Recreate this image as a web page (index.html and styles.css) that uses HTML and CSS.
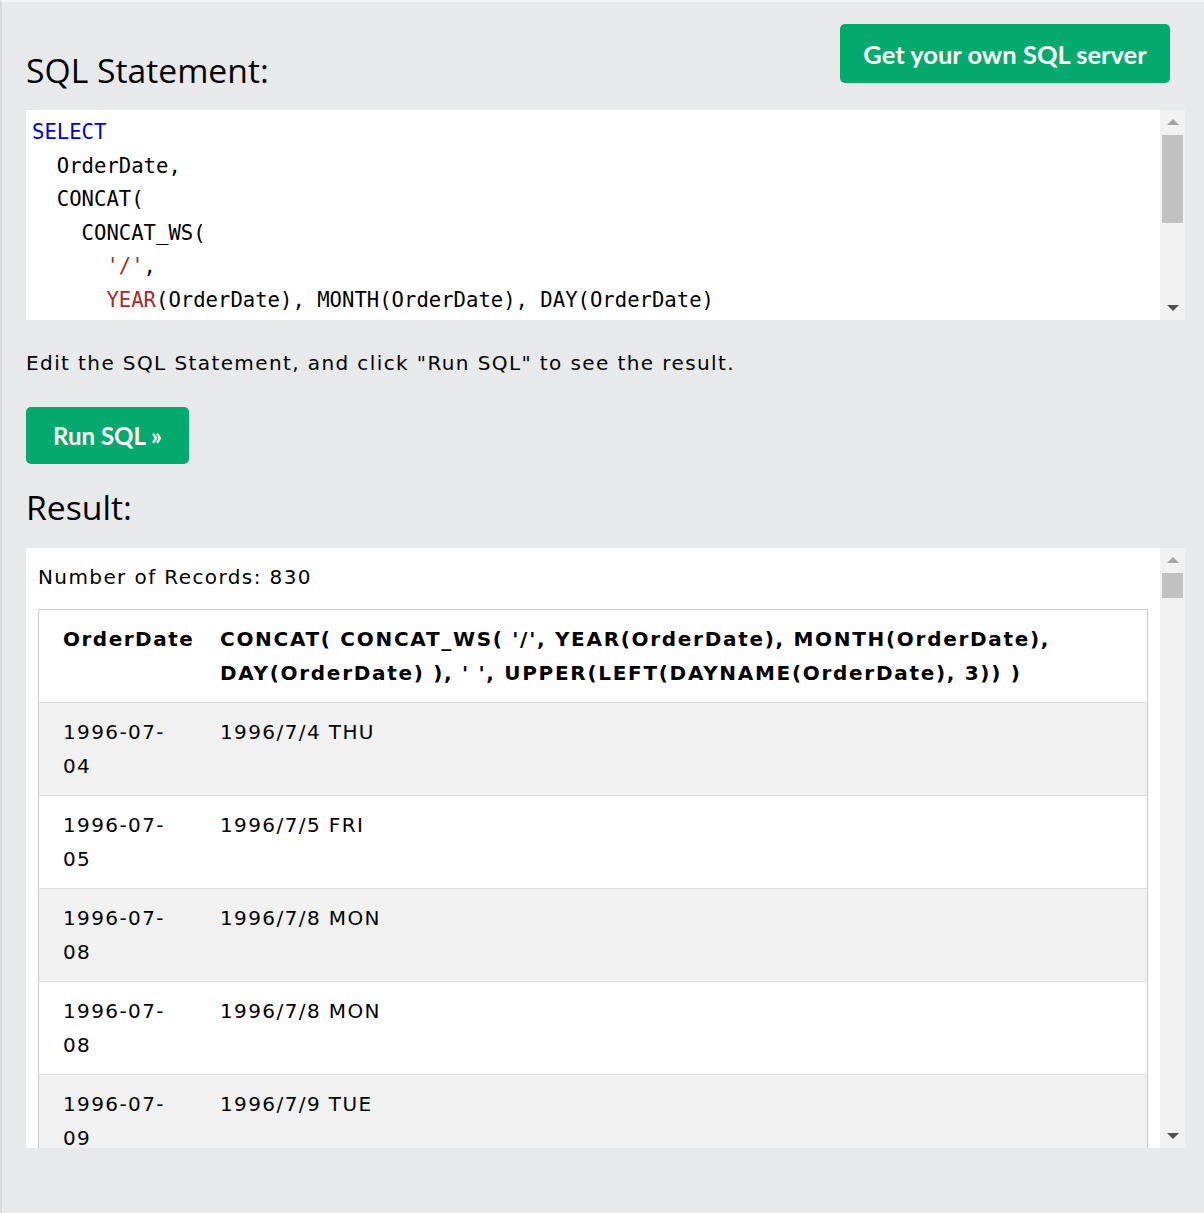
FILE: index.html
```
<!DOCTYPE html>
<html lang="en">
<head>
<meta charset="utf-8">
<title>SQL Tryit</title>
<link rel="stylesheet" href="styles.css">
</head>
<body>
<div class="frame">
  <div class="top-row">
    <h2 class="heading">SQL Statement:</h2>
    <a class="btn btn-server" href="#">Get your own SQL server</a>
  </div>
  <div class="code-box">
<pre class="code"><span class="kw">SELECT</span>
  OrderDate,
  CONCAT(
    CONCAT_WS(
      <span class="str">'/'</span>,
      <span class="fn">YEAR</span>(OrderDate), MONTH(OrderDate), DAY(OrderDate)
    ),
    <span class="str">' '</span>,
    UPPER(LEFT(DAYNAME(OrderDate), 3))
  )
<span class="kw">FROM</span> Orders;</pre>
    <div class="scrollbar">
      <span class="arrow up light"></span>
      <span class="thumb thumb-code"></span>
      <span class="spacer"></span>
      <span class="arrow down"></span>
    </div>
  </div>
  <p class="hint">Edit the SQL Statement, and click "Run SQL" to see the result.</p>
  <a class="btn btn-run" href="#">Run SQL »</a>
  <h2 class="heading result-heading">Result:</h2>
  <div class="result-box">
    <div class="result-inner">
      <div class="records">Number of Records: 830</div>
      <table class="tbl">
        <tr>
          <th>OrderDate</th>
          <th>CONCAT( CONCAT_WS( '/', YEAR(OrderDate), MONTH(OrderDate), DAY(OrderDate) ), ' ', UPPER(LEFT(DAYNAME(OrderDate), 3)) )</th>
        </tr>
        <tr><td>1996-07-04</td><td>1996/7/4 THU</td></tr>
        <tr><td>1996-07-05</td><td>1996/7/5 FRI</td></tr>
        <tr><td>1996-07-08</td><td>1996/7/8 MON</td></tr>
        <tr><td>1996-07-08</td><td>1996/7/8 MON</td></tr>
        <tr><td>1996-07-09</td><td>1996/7/9 TUE</td></tr>
        <tr><td>1996-07-10</td><td>1996/7/10 WED</td></tr>
      </table>
    </div>
    <div class="scrollbar">
      <span class="arrow up light"></span>
      <span class="thumb thumb-result"></span>
      <span class="spacer"></span>
      <span class="arrow down"></span>
    </div>
  </div>
</div>
</body>
</html>
```
FILE: styles.css
```
html, body {
  margin: 0;
  padding: 0;
  background: #e7e9eb;
}

.frame {
  box-sizing: border-box;
  height: 1213px;
  overflow: hidden;
  background: #e7e9eb;
  border-top: 2px solid #f4f4f4;
  border-left: 2px solid #d9d9d9;
  padding: 0 19px 0 24px;
  display: flex;
  flex-direction: column;
  font-family: "DejaVu Sans", Verdana, sans-serif;
  color: #000;
}

.top-row {
  display: flex;
  justify-content: space-between;
  align-items: flex-start;
  height: 108px;
}

.heading {
  font-family: "Open Sans", "Noto Sans", sans-serif;
  font-weight: 400;
  font-size: 33.7px;
  line-height: 44px;
  margin: 0;
}

.top-row .heading {
  margin-top: 46px;
}

.btn {
  display: inline-flex;
  align-items: center;
  justify-content: center;
  background: #04aa6d;
  color: #fff;
  text-decoration: none;
  font-family: "Lato", "Open Sans", sans-serif;
  font-weight: 700;
  font-size: 25.5px;
  border-radius: 5px;
  box-sizing: border-box;
}

.btn-server {
  margin-top: 22px;
  margin-right: 15px;
  width: 330px;
  height: 59px;
}

.code-box {
  position: relative;
  height: 210px;
  background: #fff;
  overflow: hidden;
}

.code {
  margin: 0;
  padding: 6px 30px 0 6px;
  font-family: "DejaVu Sans Mono", "Liberation Mono", monospace;
  font-size: 20.6px;
  line-height: 33.5px;
  color: #000;
}

.kw { color: #0000cd; }
.str { color: #a52a2a; }
.fn { color: #a52a2a; }

.scrollbar {
  position: absolute;
  top: 0;
  right: 0;
  bottom: 0;
  width: 25px;
  background: #f1f1f1;
  display: flex;
  flex-direction: column;
  align-items: center;
}

.arrow {
  display: block;
  width: 0;
  height: 0;
  border-left: 6px solid transparent;
  border-right: 6px solid transparent;
  flex: none;
}

.arrow.up {
  margin-top: 9px;
  border-bottom: 6px solid #a3a3a3;
}

.arrow.down {
  margin-bottom: 9px;
  border-top: 6px solid #505050;
}

.thumb {
  display: block;
  width: 21px;
  background: #c1c1c1;
  flex: none;
}

.thumb-code {
  margin-top: 10px;
  height: 88px;
}

.thumb-result {
  margin-top: 10px;
  height: 25px;
}

.spacer {
  flex: 1;
}

.hint {
  margin: 0;
  padding-top: 28px;
  font-size: 20px;
  line-height: 30px;
  letter-spacing: 1.4px;
}

.btn-run {
  margin-top: 29px;
  width: 163px;
  height: 57px;
  align-self: flex-start;
  font-size: 24px;
}

.result-heading {
  margin-top: 21px;
  margin-bottom: 19px;
}

.result-box {
  position: relative;
  height: 600px;
  background: #fff;
  overflow: hidden;
}

.result-inner {
  padding: 12px 37px 0 12px;
}

.records {
  font-size: 20px;
  line-height: 34px;
  letter-spacing: 1.4px;
  margin-bottom: 15px;
}

.tbl {
  width: 100%;
  table-layout: fixed;
  border-collapse: collapse;
  border: 1px solid #cccccc;
  font-size: 20px;
  line-height: 34px;
  letter-spacing: 1.4px;
}

.tbl th,
.tbl td {
  text-align: left;
  vertical-align: top;
  padding: 12px 13px 12px 13px;
}

.tbl th {
  font-weight: 700;
  letter-spacing: 1.7px;
}

.tbl th:first-child,
.tbl td:first-child {
  padding-left: 24px;
  padding-right: 20px;
  width: 124px;
  white-space: normal;
}

.tbl th:first-child {
  white-space: nowrap;
  letter-spacing: 1.5px;
}

.tbl tr {
  border-bottom: 1px solid #dddddd;
}

.tbl tr:nth-child(even) {
  background: #f1f1f1;
}

.tbl tr:nth-child(odd) {
  background: #ffffff;
}
```
